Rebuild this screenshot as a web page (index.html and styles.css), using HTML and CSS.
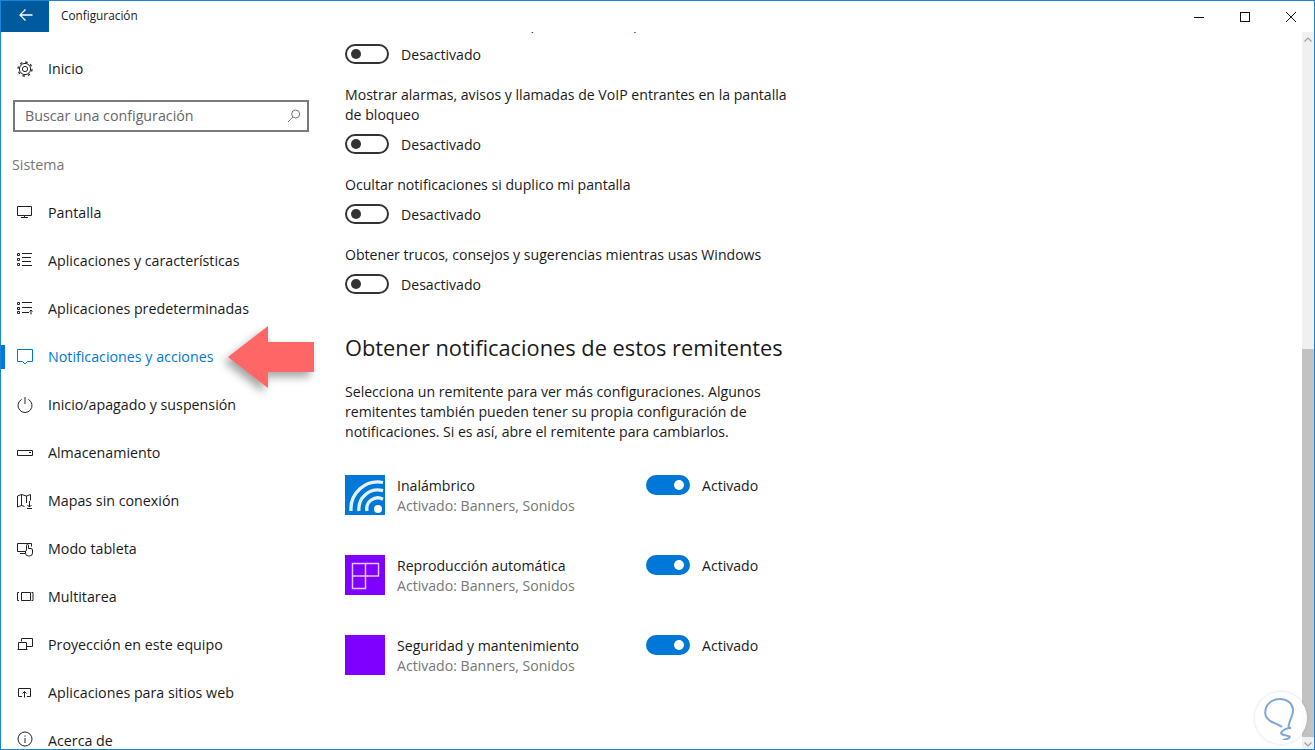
FILE: index.html
```html
<!DOCTYPE html>
<html lang="es">
<head>
<meta charset="utf-8">
<title>Configuración</title>
<link rel="stylesheet" href="styles.css">
</head>
<body>
<div class="window">
  <header class="titlebar">
    <button class="back"><svg width="14" height="12" viewBox="0 0 14 12"><path d="M6.500.5 1 6l5.500 5.500M1 6h12.500" class="white"/></svg></button>
    <span class="apptitle">Configuración</span>
    <div class="controls">
      <div class="ctl"><svg width="12" height="12" viewBox="0 0 12 12"><path d="M1 6.500h10" class="line"/></svg></div>
      <div class="ctl"><svg width="12" height="12" viewBox="0 0 12 12"><rect x="1.500" y="1.500" width="9" height="9" class="line"/></svg></div>
      <div class="ctl"><svg width="12" height="12" viewBox="0 0 12 12"><path d="M1 1l10 10M11 1 1 11" class="line"/></svg></div>
    </div>
  </header>
  <div class="body">
    <nav class="sidebar">
      <a class="nav home"><svg class="ico" viewBox="0 0 16 16"><circle cx="8" cy="8" r="2.600" class="s"/><circle cx="8" cy="8" r="5.600" class="s"/><circle cx="8" cy="8" r="7" class="teeth"/></svg><span>Inicio</span></a>
      <div class="search"><span>Buscar una configuración</span><svg width="14" height="14" viewBox="0 0 14 14"><circle cx="8.700" cy="5" r="4" class="g"/><path d="M5.800 8 1 13" class="g"/></svg></div>
      <div class="section">Sistema</div>
      <a class="nav"><svg class="ico" viewBox="0 0 16 16"><path d="M.5 1.500h14v9H.5zM7.500 10.500v2M4 12.500h7" class="s"/></svg><span>Pantalla</span></a>
      <a class="nav"><svg class="ico" viewBox="0 0 16 16"><path d="M.5.500h2v2h-2zM.5 5.500h2v2h-2zM.5 10.500h2v2h-2zM5 .5h10M5 4.500h9M5 8.500h9M5 12.500h10" class="s"/></svg><span>Aplicaciones y características</span></a>
      <a class="nav"><svg class="ico" viewBox="0 0 16 16"><path d="M.5 1.500h2v2h-2zM.5 6.500h2v2h-2zM.5 10.500h2v2h-2zM5 1.500h10M5 6.500h10M5 11.500h7M14 13.500v-4M12.500 10.500l1.500-1.500 1.500 1.500" class="s"/></svg><span>Aplicaciones predeterminadas</span></a>
      <a class="nav active"><svg class="ico" viewBox="0 0 16 16"><path d="M.5.500h15v12h-5l-2.500 2.500-2.500-2.500h-5z" class="b"/></svg><span>Notificaciones y acciones</span></a>
      <a class="nav"><svg class="ico" viewBox="0 0 16 16"><path d="M4.600 2.400a7 7 0 1 0 6.800 0M8 0v7" class="s"/></svg><span>Inicio/apagado y suspensión</span></a>
      <a class="nav"><svg class="ico" viewBox="0 0 16 16"><path d="M.5 5.500h15v5H.5z" class="s"/><path d="M12 7.500h2" class="s"/></svg><span>Almacenamiento</span></a>
      <a class="nav"><svg class="ico" viewBox="0 0 16 16"><path d="M.5 3l4-1.500 5 1.500 4-1.500v6M.5 3v11l4-1.500 3 1M4.500 1.500v11M9.500 3v7M12.500 8v6M10.500 12l2 2 2-2M10 15.500h5" class="s"/></svg><span>Mapas sin conexión</span></a>
      <a class="nav"><svg class="ico" viewBox="0 0 16 16"><path d="M8 10.500H.5v-8h14v3M3 12.500h5" class="s"/><path d="M9.500 9.500v-5a1 1 0 0 1 2 0v3h2.500a1.500 1.500 0 0 1 1.500 1.500v3a3 3 0 0 1-3 3h-1a3 3 0 0 1-3-3v-2z" class="s wf"/></svg><span>Modo tableta</span></a>
      <a class="nav"><svg class="ico" viewBox="0 0 16 16"><path d="M4.500 3.500h9v8h-9zM2 3.500H.5v8H2M14.500 3.500H16v8h-1.500" class="s"/></svg><span>Multitarea</span></a>
      <a class="nav"><svg class="ico" viewBox="0 0 16 16"><path d="M4.500 4.500v-3h11v8H10M.5 12.500h10M1.500 12.500v-7h8v7" class="s"/></svg><span>Proyección en este equipo</span></a>
      <a class="nav"><svg class="ico" viewBox="0 0 16 16"><path d="M5 11.500H1.500v-8h12v8H10M7.500 12.500v-6M5.500 8.500l2-2 2 2" class="s"/></svg><span>Aplicaciones para sitios web</span></a>
      <a class="nav"><svg class="ico" viewBox="0 0 16 16"><circle cx="8" cy="6" r="7" class="s"/><path d="M8 5v5M8 2.500v1.200" class="s"/></svg><span>Acerca de</span></a>
    </nav>
    <main class="main">
      <div class="setting first">
        <p class="label">Mostrar notificaciones en la pantalla de bloqueo</p>
        <div class="toggle-row"><span class="toggle"></span><span class="state">Desactivado</span></div>
      </div>
      <div class="setting">
        <p class="label">Mostrar alarmas, avisos y llamadas de VoIP entrantes en la pantalla de bloqueo</p>
        <div class="toggle-row"><span class="toggle"></span><span class="state">Desactivado</span></div>
      </div>
      <div class="setting">
        <p class="label">Ocultar notificaciones si duplico mi pantalla</p>
        <div class="toggle-row"><span class="toggle"></span><span class="state">Desactivado</span></div>
      </div>
      <div class="setting">
        <p class="label">Obtener trucos, consejos y sugerencias mientras usas Windows</p>
        <div class="toggle-row"><span class="toggle"></span><span class="state">Desactivado</span></div>
      </div>
      <h2 class="heading">Obtener notificaciones de estos remitentes</h2>
      <p class="para">Selecciona un remitente para ver más configuraciones. Algunos remitentes también pueden tener su propia configuración de notificaciones. Si es así, abre el remitente para cambiarlos.</p>
      <div class="apps">
        <div class="app">
          <svg class="tile tile-blue" viewBox="0 0 40 40"><circle cx="33" cy="34" r="4" fill="#fff"/><path d="M22 36A11 11 0 0 1 38 24.200M14 36A19 19 0 0 1 38 15.700M6 36A27 27 0 0 1 38 7.500" class="arc"/></svg>
          <div class="app-text"><div>Inalámbrico</div><div class="sub">Activado: Banners, Sonidos</div></div>
          <div class="toggle-row on"><span class="toggle"></span><span class="state">Activado</span></div>
        </div>
        <div class="app">
          <svg class="tile tile-purple" viewBox="0 0 40 40"><path d="M7.500 8.500h26v12.500H20.500v12.500h-13zM20.500 8.500V21M7.500 21h13" class="cells"/></svg>
          <div class="app-text"><div>Reproducción automática</div><div class="sub">Activado: Banners, Sonidos</div></div>
          <div class="toggle-row on"><span class="toggle"></span><span class="state">Activado</span></div>
        </div>
        <div class="app">
          <svg class="tile tile-purple" viewBox="0 0 40 40"></svg>
          <div class="app-text"><div>Seguridad y mantenimiento</div><div class="sub">Activado: Banners, Sonidos</div></div>
          <div class="toggle-row on"><span class="toggle"></span><span class="state">Activado</span></div>
        </div>
      </div>
    </main>
    <div class="scrollbar">
      <div class="sb-btn"><svg width="8" height="5" viewBox="0 0 8 5"><path d="M.5 4.500 4 1l3.500 3.500" class="chev"/></svg></div>
      <div class="sb-gap"></div>
      <div class="sb-thumb"></div>
      <div class="sb-btn down"><svg width="8" height="5" viewBox="0 0 8 5"><path d="M.5.5 4 4 7.500.5" class="chev"/></svg></div>
    </div>
  </div>
  <svg class="arrow" width="88" height="64" viewBox="0 0 88 64"><path d="M1 32 41 1v16h46v30H41v16z" fill="#ff6666"/></svg>
  <div class="badge"><svg width="40" height="44" viewBox="0 0 40 44"><path d="M21 31c-2-2-6-3-10-5C5 23 3 18 5 12 7 6 13 3 19 3c7 0 12 4 13 10 1 5-3 10-4 15-1 3 0 4 2 4-4 0-9 2-10 5 0 2 4 2 7 3 3 0 2 2-1 3l-4 1" class="bulb"/></svg></div>
</div>
</body>
</html>
```
FILE: styles.css
```css
* { box-sizing: border-box; }
html, body { margin: 0; height: 100%; overflow: hidden; background: #fff; }
body { font-family: "Open Sans", "Noto Sans", sans-serif; font-size: 14.25px; line-height: 20px; color: #1a1a1a; }
p, h2 { margin: 0; }
svg { display: block; fill: none; flex: none; }

.window { position: relative; width: 1315px; height: 750px; border: 1px solid #1883d7; display: flex; flex-direction: column; overflow: hidden; }

.titlebar { height: 31px; display: flex; align-items: center; flex: none; }
.back { width: 48px; height: 31px; background: #005a9e; border: 0; padding: 0 0 3px 18px; display: flex; align-items: center; }
.white { stroke: #fff; stroke-width: 1.300; }
.apptitle { margin-left: 12px; font-size: 11.800px; padding-bottom: 4px; }
.controls { margin-left: auto; display: flex; }
.ctl { width: 46px; height: 31px; display: flex; align-items: center; justify-content: center; }
.line { stroke: #111; stroke-width: 1; fill: none; }

.body { flex: 1; display: flex; min-height: 0; }

.sidebar { width: 320px; flex: none; overflow: hidden; }
.nav { height: 48px; display: flex; align-items: center; padding-left: 16px; gap: 15px; position: relative; }
.nav.home { margin-top: 13px; }
.ico { width: 16px; height: 16px; overflow: visible; }
.s { stroke: #222; stroke-width: 1; fill: none; }
.wf { fill: #fff; }
.b { stroke: #0078d7; stroke-width: 1; fill: none; }
.teeth { stroke: #333; stroke-width: 1.300; stroke-dasharray: 2.500 3; fill: none; }
.active { color: #0078d7; }
.active::before { content: ""; position: absolute; left: 0; top: 12px; width: 4px; height: 24px; background: #0078d7; }

.search { margin: 7px 0 0 12px; width: 296px; height: 32px; border: 2px solid #7a7a7a; display: flex; align-items: center; justify-content: space-between; padding: 0 6px 0 10px; color: #666; }
.g { stroke: #777; stroke-width: 1; }
.section { height: 57px; padding: 23px 0 0 11px; color: #767676; }

.main { flex: 1; overflow: hidden; padding-left: 24px; font-size: 14.100px; }
.setting { width: 456px; margin-top: 20px; }
.setting.first { margin-top: -19px; }
.first .toggle-row { margin-top: 10px; }
.label { padding-top: 1px; }
.toggle-row { display: flex; align-items: center; gap: 12px; height: 20px; margin-top: 9px; }
.state { padding-top: 2px; }
.toggle { width: 44px; height: 20px; border: 2px solid #333; border-radius: 10px; position: relative; flex: none; }
.toggle::after { content: ""; position: absolute; left: 4px; top: 3px; width: 10px; height: 10px; border-radius: 50%; background: #333; }
.on .toggle { background: #0078d7; border-color: #0078d7; }
.on .toggle::after { left: auto; right: 4px; background: #fff; }

.heading { font-size: 21.800px; font-weight: 400; line-height: 30px; margin-top: 39px; }
.para { width: 456px; margin-top: 19px; }

.apps { margin-top: 33px; display: flex; flex-direction: column; gap: 40px; }
.app { display: flex; height: 40px; width: 456px; }
.tile { width: 40px; height: 40px; }
.tile-blue { background: #0078d7; }
.tile-purple { background: #7f00ff; }
.arc { stroke: #fff; stroke-width: 3.300; opacity: .9; }
.cells { stroke: #e0c8ff; stroke-width: 1.500; }
.app-text { margin-left: 12px; padding-top: 1px; width: 249px; flex: none; }
.sub { color: #767676; }
.app .toggle-row { margin-top: 0; }

.scrollbar { width: 12px; flex: none; display: flex; flex-direction: column; background: #f0f0f0; margin-left: auto; }
.sb-btn { height: 12px; display: flex; align-items: center; justify-content: center; padding-top: 2px; flex: none; }
.sb-gap { height: 305px; flex: none; }
.sb-thumb { flex: 1; background: #c2c2c2; }
.chev { stroke: #a0a0a0; stroke-width: 1.200; }

.arrow { position: absolute; left: 226px; top: 324px; filter: drop-shadow(-4px 5px 4px rgba(0,0,0,.35)); overflow: visible; }
.badge { position: absolute; left: 1254px; top: 691px; width: 52px; height: 52px; border-radius: 50%; background: rgba(255,255,255,.95); box-shadow: 0 0 3px rgba(90,130,200,.35); display: flex; align-items: center; justify-content: center; }
.bulb { stroke: #7ea6da; stroke-width: 2; fill: none; }
```
